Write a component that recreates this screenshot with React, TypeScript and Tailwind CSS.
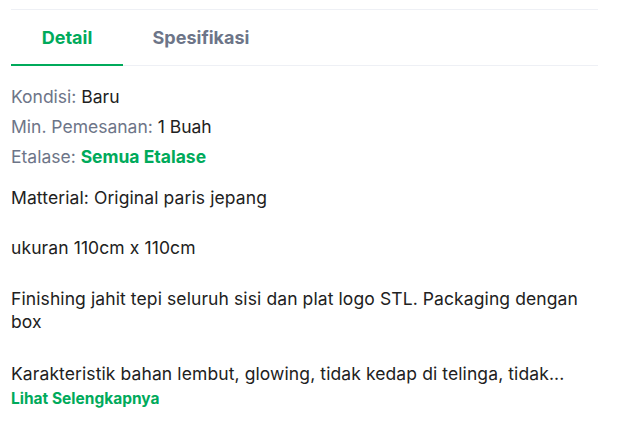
export default function App() {
  return (
    <div
      className="w-[640px] h-[430px] bg-white pl-[11px] pt-[9px]"
      style={{ fontFamily: "Inter, 'Open Sans', sans-serif" }}
    >
      <div className="w-[587px] border-t border-[#eef0f5]">
        <div className="flex border-b border-[#eef0f5] h-[56px]">
          <div className="w-[112px] flex items-center justify-center border-b-2 border-[#00aa5b] -mb-px text-[#00aa5b] font-bold text-[18px]">
            Detail
          </div>
          <div className="w-[156px] flex items-center justify-center text-[#6d7588] font-bold text-[18px]">
            Spesifikasi
          </div>
        </div>
        <div className="pt-[16px] text-[17.5px] text-[#212121]">
          <div className="leading-[30px]">
            <div>
              <span className="text-[#6d7588]">Kondisi: </span>Baru
            </div>
            <div>
              <span className="text-[#6d7588]">Min. Pemesanan: </span>1 Buah
            </div>
            <div>
              <span className="text-[#6d7588]">Etalase: </span>
              <span className="text-[#00aa5b] font-bold">Semua Etalase</span>
            </div>
          </div>
          <div className="mt-[14px] leading-[23px] tracking-[0.1px]">
            <p>Matterial: Original paris jepang</p>
            <p className="mt-[27px]">ukuran 110cm x 110cm</p>
            <p className="mt-[28px]">
              Finishing jahit tepi seluruh sisi dan plat logo STL. Packaging dengan box
            </p>
            <p className="mt-[29px]">
              Karakteristik bahan lembut, glowing, tidak kedap di telinga, tidak...
            </p>
          </div>
          <div className="text-[15.5px] font-bold text-[#00aa5b] leading-[20px] mt-[4px]">
            Lihat Selengkapnya
          </div>
        </div>
      </div>
    </div>
  );
}
